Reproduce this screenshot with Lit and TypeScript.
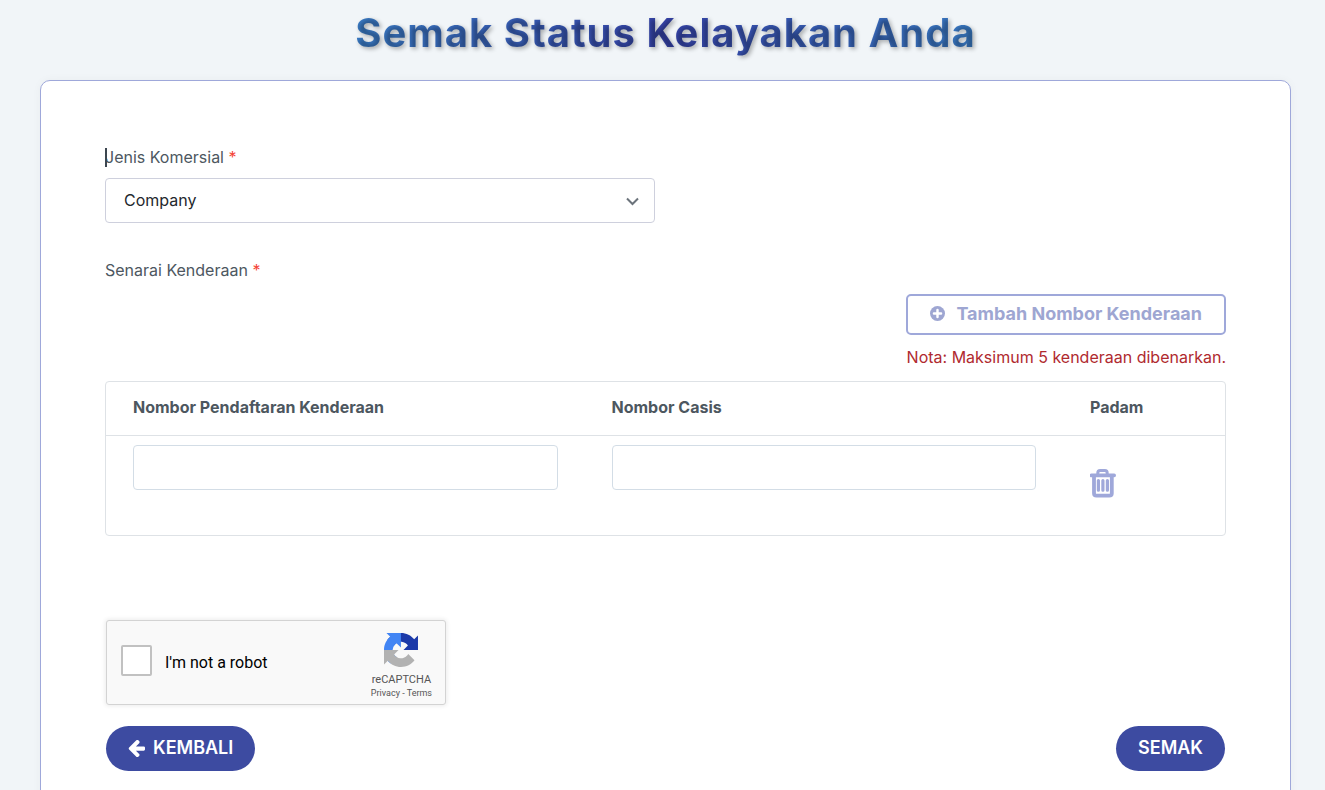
import { LitElement, html, css } from "lit";
import { customElement, state } from "lit/decorators.js";

interface Vehicle {
  id: number;
  plate: string;
  chassis: string;
}

@customElement("app-root")
export class AppRoot extends LitElement {
  static styles = css`
    :host {
      display: block;
      height: 100vh;
      overflow: hidden;
      background: #f1f5f8;
      color: #4d575f;
      font-family: Inter, "Noto Sans", sans-serif;
      font-size: 16px;
      line-height: 24px;
    }
    *,
    *::before,
    *::after {
      box-sizing: border-box;
    }
    .page {
      padding: 8px 34px 40px 40px;
    }
    .title {
      margin: 0 0 22px;
      text-align: center;
      font-size: 40px;
      line-height: 50px;
      font-weight: 700;
      letter-spacing: 1px;
    }
    .title-text {
      background: linear-gradient(90deg, #3a7bc4, #3643a8 50%, #3a7bc4);
      -webkit-background-clip: text;
      background-clip: text;
      color: transparent;
      text-shadow: 2px 2px 4px rgba(0, 0, 0, 0.3);
    }
    .card {
      background: #fff;
      border: 1px solid #9fa8da;
      border-radius: 10px;
      box-shadow: 0 0 10px rgba(0, 0, 0, 0.04);
      padding: 64px;
    }
    .row {
      display: grid;
      grid-template-columns: 1fr 1fr;
      gap: 22px;
    }
    .label {
      display: block;
      position: relative;
      width: max-content;
    }
    .req {
      color: #f44336;
    }
    .caret {
      position: absolute;
      left: 0;
      top: 3px;
      width: 2px;
      height: 19px;
      background: #3c4650;
    }
    .select-wrap {
      position: relative;
      margin-top: 9px;
    }
    .select {
      appearance: none;
      display: block;
      width: 100%;
      height: 45px;
      padding: 0 48px 2px 18px;
      border: 1px solid #ced0dd;
      border-radius: 4px;
      background: #fff;
      color: #24282d;
      font: inherit;
    }
    .chevron {
      position: absolute;
      right: 16px;
      top: 19px;
      width: 13px;
      height: 10px;
      pointer-events: none;
    }
    .section {
      margin-top: 35px;
    }
    .tools {
      display: flex;
      flex-direction: column;
      align-items: flex-end;
      gap: 10px;
      margin-top: 12px;
    }
    .add {
      display: flex;
      align-items: center;
      gap: 11px;
      height: 41px;
      padding: 0 22px 2px;
      border: 2px solid #9fa8da;
      border-radius: 5px;
      background: #fff;
      color: #9ea6d2;
      font: inherit;
      font-size: 18px;
      font-weight: 700;
    }
    .add-icon {
      width: 15px;
      height: 15px;
    }
    .note {
      color: #b02a2f;
    }
    .table-box {
      margin-top: 12px;
      border: 1px solid #dee2e6;
      border-radius: 4px;
    }
    .table {
      width: 100%;
      table-layout: fixed;
      border-collapse: collapse;
    }
    .col-remove {
      width: 162px;
    }
    .head {
      height: 53px;
      padding: 0 27px 2px;
      text-align: left;
      font-weight: 700;
      border-bottom: 1px solid #dee2e6;
    }
    .cell {
      height: 100px;
      padding: 9px 27px;
      vertical-align: top;
    }
    .input {
      display: block;
      width: 100%;
      height: 45px;
      padding: 0 16px;
      border: 1px solid #d3dde6;
      border-radius: 4px;
      background: #fff;
      color: #24282d;
      font: inherit;
    }
    .remove {
      display: block;
      margin-top: 24px;
      padding: 0;
      border: 0;
      background: none;
      color: #9fa8da;
    }
    .trash {
      display: block;
      width: 27px;
      height: 29px;
    }
    .captcha {
      display: flex;
      justify-content: space-between;
      width: 340px;
      height: 85px;
      margin: 84px 0 0 1px;
      padding: 0 13px 0 14px;
      border: 1px solid #d3d3d3;
      border-radius: 3px;
      background: #f9f9f9;
      box-shadow: 0 0 4px 1px rgba(0, 0, 0, 0.08);
      font-family: Roboto, sans-serif;
    }
    .robot {
      display: flex;
      align-items: center;
      gap: 13px;
      color: #000;
    }
    .tick {
      appearance: none;
      width: 31px;
      height: 31px;
      margin: 0 0 4px;
      border: 2px solid #c1c1c1;
      border-radius: 2px;
      background: #fff;
    }
    .brand {
      display: flex;
      flex-direction: column;
      align-items: center;
      padding-top: 12px;
      color: #555;
    }
    .brand-logo {
      width: 34px;
      height: 34px;
    }
    .brand-name {
      margin-top: 6px;
      font-size: 11px;
      line-height: 14px;
    }
    .legal {
      font-size: 9px;
      line-height: 13px;
    }
    .link {
      color: inherit;
      text-decoration: none;
    }
    .actions {
      display: flex;
      justify-content: space-between;
      margin: 21px 1px 0;
    }
    .pill {
      display: flex;
      align-items: center;
      gap: 8px;
      height: 45px;
      padding: 0 22px 1px;
      border: 0;
      border-radius: 23px;
      background: #3d4ba1;
      color: #fff;
      font: inherit;
      font-size: 18px;
      font-weight: 600;
    }
    .arrow {
      width: 17px;
      height: 17px;
    }
  `;

  @state() private vehicles: Vehicle[] = [{ id: 1, plate: "", chassis: "" }];

  private addVehicle() {
    if (this.vehicles.length >= 5) return;
    this.vehicles = [...this.vehicles, { id: Date.now(), plate: "", chassis: "" }];
  }

  private removeVehicle(id: number) {
    if (this.vehicles.length > 1) {
      this.vehicles = this.vehicles.filter((v) => v.id !== id);
    }
  }

  private vehicleRow(v: Vehicle) {
    return html`<tr>
      <td class="cell"><input class="input" type="text" aria-labelledby="col-plate" .value=${v.plate} /></td>
      <td class="cell"><input class="input" type="text" aria-labelledby="col-chassis" .value=${v.chassis} /></td>
      <td class="cell">
        <button class="remove" type="button" aria-label="Padam" @click=${() => this.removeVehicle(v.id)}>
          <svg class="trash" viewBox="0 0 27 29" fill="none" stroke="currentColor">
            <path d="M7.8 5.6V3.9Q7.8 1.6 10.1 1.6H14.9Q17.2 1.6 17.2 3.9V5.6" stroke-width="3" />
            <path d="M1.4 6.4H24.2" stroke-width="3.6" stroke-linecap="round" />
            <path d="M4 7.5V24.2Q4 26.7 6.5 26.7H19.3Q21.8 26.7 21.8 24.2V7.5" stroke-width="3.8" />
            <path d="M8.4 11.5V21.2M12.9 11.5V21.2M17.4 11.5V21.2" stroke-width="3.2" stroke-linecap="round" />
          </svg>
        </button>
      </td>
    </tr>`;
  }

  render() {
    return html`
      <main class="page">
        <h1 class="title"><span class="title-text">Semak Status Kelayakan Anda</span></h1>
        <form class="card" @submit=${(e: Event) => e.preventDefault()}>
          <div class="row">
            <div>
              <label class="label" for="type">Jenis Komersial <span class="req">*</span><span class="caret"></span></label>
              <div class="select-wrap">
                <select class="select" id="type">
                  <option>Company</option>
                </select>
                <svg class="chevron" viewBox="0 0 13 10" fill="none" stroke="#6b737b" stroke-width="2">
                  <path d="M1 1.5L6.5 7L12 1.5" />
                </svg>
              </div>
            </div>
          </div>

          <section class="section">
            <span class="label">Senarai Kenderaan <span class="req">*</span></span>
            <div class="tools">
              <button class="add" type="button" @click=${this.addVehicle}>
                <svg class="add-icon" viewBox="0 0 16 16">
                  <circle cx="8" cy="8" r="8" fill="currentColor" />
                  <path d="M8 4.2V11.8M4.2 8H11.8" stroke="#fff" stroke-width="2.6" stroke-linecap="round" />
                </svg>
                Tambah Nombor Kenderaan
              </button>
              <div class="note">Nota: Maksimum 5 kenderaan dibenarkan.</div>
            </div>
            <div class="table-box">
              <table class="table">
                <colgroup>
                  <col />
                  <col />
                  <col class="col-remove" />
                </colgroup>
                <thead>
                  <tr>
                    <th class="head" id="col-plate">Nombor Pendaftaran Kenderaan</th>
                    <th class="head" id="col-chassis">Nombor Casis</th>
                    <th class="head">Padam</th>
                  </tr>
                </thead>
                <tbody>
                  ${this.vehicles.map((v) => this.vehicleRow(v))}
                </tbody>
              </table>
            </div>
          </section>

          <div class="captcha">
            <label class="robot"><input class="tick" type="checkbox" />I'm not a robot</label>
            <div class="brand">
              <svg class="brand-logo" viewBox="0 0 64 64">
                <path
                  fill="#1c3aa9"
                  d="M64 31.955l-.033-1.37V4.687l-7.16 7.16C50.948 4.674 42.033.093 32.05.093c-10.4 0-19.622 4.96-25.458 12.64l11.736 11.86a15.55 15.55 0 0 1 4.754-5.334c2.05-1.6 4.952-2.906 8.968-2.906.485 0 .86.057 1.135.163 4.976.393 9.288 3.14 11.828 7.124l-8.307 8.307L64 31.953"
                />
                <path
                  fill="#4285f4"
                  d="M31.862.094l-1.37.033H4.594l7.16 7.16C4.58 13.147 0 22.06 0 32.046c0 10.4 4.96 19.622 12.64 25.458L24.5 45.768a15.55 15.55 0 0 1-5.334-4.754c-1.6-2.05-2.906-4.952-2.906-8.968 0-.485.057-.86.163-1.135.393-4.976 3.14-9.288 7.124-11.828l8.307 8.307L31.86.095"
                />
                <path
                  fill="#b2b2b2"
                  d="M.001 32.045l.033 1.37v25.898l7.16-7.16c5.86 7.173 14.774 11.754 24.76 11.754 10.4 0 19.622-4.96 25.458-12.64l-11.736-11.86a15.55 15.55 0 0 1-4.754 5.334c-2.05 1.6-4.952 2.906-8.968 2.906-.485 0-.86-.057-1.135-.163-4.976-.393-9.288-3.14-11.828-7.124l8.307-8.307c-10.522.04-22.4.066-27.295-.005"
                />
              </svg>
              <div class="brand-name">reCAPTCHA</div>
              <div class="legal">
                <a class="link" href="#privacy">Privacy</a> - <a class="link" href="#terms">Terms</a>
              </div>
            </div>
          </div>

          <div class="actions">
            <button class="pill" type="button">
              <svg class="arrow" viewBox="128 192 1536 1536" fill="currentColor">
                <path
                  d="M1664 896v128q0 53-32.5 90.5t-84.5 37.5h-704l293 294q38 36 38 90t-38 90l-75 76q-37 37-90 37-52 0-91-37l-651-652q-37-37-37-90 0-52 37-91l651-650q38-38 91-38 52 0 90 38l75 74q38 38 38 91t-38 91l-293 293h704q52 0 84.5 37.5t32.5 90.5z"
                />
              </svg>
              KEMBALI
            </button>
            <button class="pill" type="submit">SEMAK</button>
          </div>
        </form>
      </main>
    `;
  }
}
